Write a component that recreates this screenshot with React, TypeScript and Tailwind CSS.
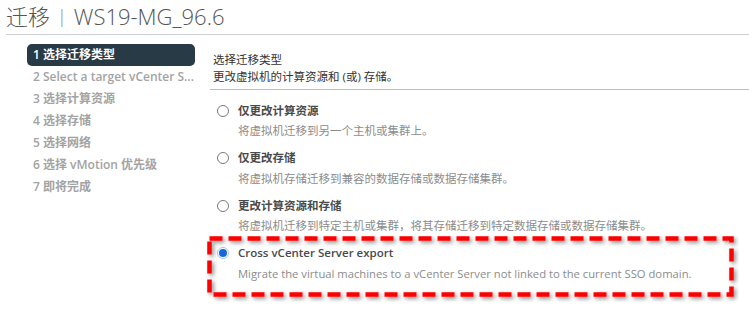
import React from "react";

const steps = [
  "1 选择迁移类型",
  "2 Select a target vCenter S...",
  "3 选择计算资源",
  "4 选择存储",
  "5 选择网络",
  "6 选择 vMotion 优先级",
  "7 即将完成",
];

const options = [
  { label: "仅更改计算资源", desc: "将虚拟机迁移到另一个主机或集群上。" },
  { label: "仅更改存储", desc: "将虚拟机存储迁移到兼容的数据存储或数据存储集群。" },
  {
    label: "更改计算资源和存储",
    desc: "将虚拟机迁移到特定主机或集群，将其存储迁移到特定数据存储或数据存储集群。",
  },
  {
    label: "Cross vCenter Server export",
    desc: "Migrate the virtual machines to a vCenter Server not linked to the current SSO domain.",
    checked: true,
  },
];

const font = {
  fontFamily: '"Open Sans", "Noto Sans CJK SC", sans-serif',
};

const Radio = ({ checked }: { checked?: boolean }) =>
  checked ? (
    <span className="flex h-[12px] w-[12px] items-center justify-center rounded-full border border-[#a9c3e0] bg-white">
      <span className="h-[8px] w-[8px] rounded-full bg-[#1668d6]" />
    </span>
  ) : (
    <span className="h-[12px] w-[12px] rounded-full border border-[#7a7a7a] bg-white" />
  );

// red dashed annotation around the selected option
const Highlight = () => (
  <svg
    className="pointer-events-none absolute left-[-10px] top-[-9px]"
    width="532"
    height="66"
    viewBox="0 0 532 66"
  >
    <defs>
      <filter id="sh" x="-5%" y="-20%" width="110%" height="140%">
        <feDropShadow dx="2" dy="2" stdDeviation="2" floodColor="#000" floodOpacity="0.45" />
      </filter>
    </defs>
    <rect
      x="2.5"
      y="2.5"
      width="522"
      height="56"
      fill="none"
      stroke="#ff0000"
      strokeWidth="4.5"
      strokeDasharray="13 6"
      filter="url(#sh)"
    />
  </svg>
);

export default function App() {
  return (
    <div className="h-[312px] w-[749px] overflow-hidden bg-white text-[#4a4a4a]" style={font}>
      <div className="ml-[6px] flex h-[35px] items-center border-b border-[#cfcfcf] pb-[2px] text-[22px] font-light text-[#555]">
        <span>迁移</span>
        <span className="mx-[7px] text-[18px] text-[#888]">|</span>
        <span>WS19-MG_96.6</span>
      </div>

      <div className="flex">
        <div className="ml-[27px] mt-[9px] w-[168px] shrink-0">
          {steps.map((s, i) => (
            <div
              key={s}
              className={
                "flex h-[22px] items-center whitespace-nowrap rounded-[5px] pl-[6px] text-[12px] font-semibold " +
                (i === 0 ? "bg-[#283a46] text-white" : "text-[#a3a3a3]")
              }
            >
              {s}
            </div>
          ))}
        </div>

        <div className="ml-[15px] flex-1">
          <div className="mt-[16px] pl-[3px] text-[11.5px] leading-[17px] text-[#333]">
            <div>选择迁移类型</div>
            <div>更改虚拟机的计算资源和 (或) 存储。</div>
          </div>
          <div className="mt-[4px] border-t border-[#bdbdbd]" />

          <div className="pl-[7px] pt-[12px]">
            {options.map((o) => (
              <div key={o.label} className="relative h-[47.5px]">
                <div className="flex h-[17px] items-center">
                  <div className="flex w-[21px] items-center">
                    <Radio checked={o.checked} />
                  </div>
                  <span className="text-[11.5px] font-semibold text-[#4a4a4a]">{o.label}</span>
                </div>
                <div
                  className={
                    "mt-[3px] pl-[21px] leading-[17px] text-[#8c8c8c] " +
                    (o.checked ? "text-[11.25px]" : "text-[11.5px]")
                  }
                >
                  {o.desc}
                </div>
                {o.checked && <Highlight />}
              </div>
            ))}
          </div>
        </div>
      </div>
    </div>
  );
}
